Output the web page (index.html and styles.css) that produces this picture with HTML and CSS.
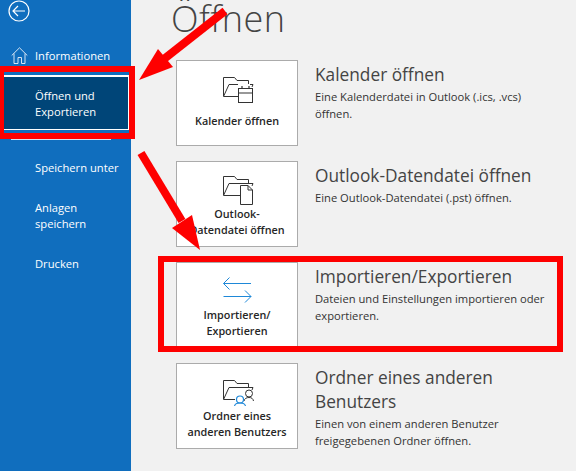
FILE: index.html
```html
<!DOCTYPE html>
<html lang="de">
<head>
    <meta charset="UTF-8">
    <meta name="viewport" content="width=device-width, initial-scale=1.0">
    <title>Öffnen</title>
    <link rel="stylesheet" href="styles.css">
</head>

<body>
    <div class="app">
        <nav class="sidebar">
            <svg class="back" width="22" height="22" viewBox="0 0 22 22" fill="none" stroke="#fff" stroke-width="1.2">
                <circle cx="11" cy="11" r="10"/>
                <path d="M5 11H17M10 6L5 11L10 16"/>
            </svg>
            <a class="nav-item nav-info">
                <svg class="home" width="17" height="17" viewBox="0 0 17 17" fill="none" stroke="#d5e4f3" stroke-width="1">
                    <path d="M0.7 8.5L8.5 0.8L16.3 8.5M3 6.5V16.5H7V10.5H10.5V16.5H14V6.5"/>
                </svg>
                Informationen
            </a>
            <a class="nav-item nav-active">Öffnen und<br>Exportieren</a>
            <div class="nav-sep"></div>
            <a class="nav-item nav-save">Speichern unter</a>
            <a class="nav-item nav-attach">Anlagen<br>speichern</a>
            <a class="nav-item nav-print">Drucken</a>
        </nav>

        <main class="content">
            <h1 class="title">Öffnen</h1>

            <section class="row">
                <button class="card">
                    <svg class="icon" width="31" height="26" viewBox="0 0 31 26" fill="none" stroke="#333" stroke-width="1">
                        <path d="M0.5 19V0.5H11.5L14 3.5H25.5V7"/>
                        <path d="M0.5 19.5L6 7.5H15M27 7.5H30L29 10"/>
                        <path d="M0.5 19.5H15"/>
                        <rect x="15.5" y="11.5" width="14" height="14" fill="#fff"/>
                        <path d="M15.5 16H29.5M19 9V12M26 9V12" stroke-width="1.2"/>
                    </svg>
                    <span class="card-label">Kalender öffnen</span>
                </button>
                <div class="info">
                    <h2>Kalender öffnen</h2>
                    <p>Eine Kalenderdatei in Outlook (.ics, .vcs) öffnen.</p>
                </div>
            </section>

            <section class="row">
                <button class="card">
                    <svg class="icon icon-doc" width="31" height="29" viewBox="0 0 31 29" fill="none" stroke="#333" stroke-width="1">
                        <path d="M0.5 19V0.5H11.5L14 3.5H25.5V7"/>
                        <path d="M0.5 19.5L6 7.5H30L29 10"/>
                        <path d="M0.5 19.5H17"/>
                        <path d="M17.5 9.5H25L29.5 14V28.5H17.5Z" fill="#fff"/>
                        <path d="M25 9.5V14H29.5"/>
                    </svg>
                    <span class="card-label">Outlook-<br>Datendatei öffnen</span>
                </button>
                <div class="info">
                    <h2>Outlook-Datendatei öffnen</h2>
                    <p>Eine Outlook-Datendatei (.pst) öffnen.</p>
                </div>
            </section>

            <section class="row">
                <button class="card">
                    <svg class="icon icon-swap" width="31" height="26" viewBox="0 0 31 26" fill="none" stroke="#1e88d8" stroke-width="1">
                        <path d="M0.5 6.5H28M6.5 0.5L0.5 6.5L6.5 12.5"/>
                        <path d="M0.5 19.5H28M22 13.5L28 19.5L22 25.5"/>
                    </svg>
                    <span class="card-label">Importieren/<br>Exportieren</span>
                </button>
                <div class="info">
                    <h2>Importieren/Exportieren</h2>
                    <p>Dateien und Einstellungen importieren oder exportieren.</p>
                </div>
            </section>

            <section class="row">
                <button class="card">
                    <svg class="icon" width="31" height="26" viewBox="0 0 31 26" fill="none" stroke="#333" stroke-width="1">
                        <path d="M0.5 19V0.5H11.5L14 3.5H25.5V7"/>
                        <path d="M0.5 19.5L6 7.5H30L29 10"/>
                        <path d="M0.5 19.5H12"/>
                        <circle cx="26" cy="13.5" r="3.5" fill="#fff"/>
                        <path d="M21 21C21.5 18.5 23.5 17.5 26 17.5C28.5 17.5 30 18.5 30.5 21"/>
                        <circle cx="17" cy="19.5" r="3.5" fill="#fff" stroke="#1e88d8" stroke-width="1.2"/>
                        <path d="M11.5 26C12 24 14 23 17 23C20 23 22 24 22.5 26" stroke="#1e88d8" stroke-width="1.2"/>
                    </svg>
                    <span class="card-label">Ordner eines<br>anderen Benutzers</span>
                </button>
                <div class="info">
                    <h2>Ordner eines anderen Benutzers</h2>
                    <p>Einen von einem anderen Benutzer freigegebenen Ordner öffnen.</p>
                </div>
            </section>
        </main>
    </div>

    <!-- rote Markierungen ueber dem Screenshot -->
    <div class="mark mark-nav"></div>
    <div class="mark mark-row"></div>
    <svg class="arrows" width="576" height="471" viewBox="0 0 576 471" fill="#fe0000" stroke="#fe0000">
        <path d="M225 11L164 59" stroke-width="8"/>
        <path d="M139 80L158 49L173 67Z" stroke="none"/>
        <path d="M141 153L182 221" stroke-width="8"/>
        <path d="M200 250L172 228L192 215Z" stroke="none"/>
    </svg>
</body>

</html>
```

FILE: styles.css
```css
* {
    box-sizing: border-box;
}

html, body {
    margin: 0;
    height: 100%;
    overflow: hidden;
}

body {
    font-family: "Open Sans", "Noto Sans", sans-serif;
    background-color: #f1f1f1;
    position: relative;
}

.app {
    display: flex;
    height: 471px;
}

/* Seitenleiste */
.sidebar {
    width: 131px;
    flex-shrink: 0;
    background-color: #106ebe;
    color: #fff;
    display: flex;
    flex-direction: column;
    font-size: 11.2px;
    line-height: 16px;
}

.back {
    display: block;
    margin-left: 8px;
    height: 22px;
}

.nav-item {
    display: block;
    padding-left: 35px;
    position: relative;
}

.nav-info {
    margin-top: 26px;
    height: 16px;
}

.home {
    position: absolute;
    left: 11px;
    top: -1px;
}

.nav-active {
    margin-top: 11px;
    width: 129px;
    height: 55px;
    padding-top: 11px;
    background-color: #004578;
    border: 1px solid #fff;
    border-width: 2px 1px 1px 0;
}

.nav-sep {
    margin: 9px 0 0 11px;
    width: 100px;
    height: 1px;
    background-color: #d5e4f3;
}

.nav-save {
    margin-top: 20px;
}

.nav-attach {
    margin-top: 24px;
}

.nav-print {
    margin-top: 24px;
}

/* Inhalt */
.content {
    flex: 1;
    padding-left: 45px;
    display: flex;
    flex-direction: column;
    gap: 15px;
}

.title {
    margin: 0 0 0 -5px;
    height: 45px;
    font-size: 36px;
    line-height: 38px;
    font-weight: 300;
    letter-spacing: 0.5px;
    color: #444;
}

.row {
    display: flex;
    height: 86px;
}

.card {
    width: 122px;
    height: 86px;
    flex-shrink: 0;
    padding: 16px 0 0;
    background-color: #fff;
    border: 1px solid #ababab;
    display: flex;
    flex-direction: column;
    align-items: center;
    font-family: inherit;
}

.icon {
    display: block;
    flex-shrink: 0;
    margin-left: 3px;
}

.icon-doc {
    margin-top: -2px;
    margin-bottom: -1px;
}

.icon-swap {
    margin-top: -2px;
    margin-bottom: 2px;
}

.card-label {
    height: 32px;
    margin-top: 2px;
    display: flex;
    align-items: center;
    font-size: 10.8px;
    line-height: 16px;
    font-weight: 600;
    color: #262626;
    white-space: nowrap;
    text-align: center;
}

.info {
    margin-left: 17px;
    width: 240px;
}

.info h2 {
    margin: 3px 0 2px;
    font-size: 17.3px;
    line-height: 24px;
    font-weight: 400;
    color: #444;
}

.info p {
    margin: 0;
    font-size: 11.2px;
    line-height: 16.5px;
    color: #333;
}

/* Markierungen */
.mark {
    position: absolute;
    border-style: solid;
    border-color: #fe0000;
}

.mark-nav {
    left: 0;
    top: 66px;
    width: 135px;
    height: 73px;
    border-width: 6px 6px 6px 4px;
}

.mark-row {
    left: 158px;
    top: 256px;
    width: 405px;
    height: 96px;
    border-width: 6px;
}

.arrows {
    position: absolute;
    left: 0;
    top: 0;
}
```
